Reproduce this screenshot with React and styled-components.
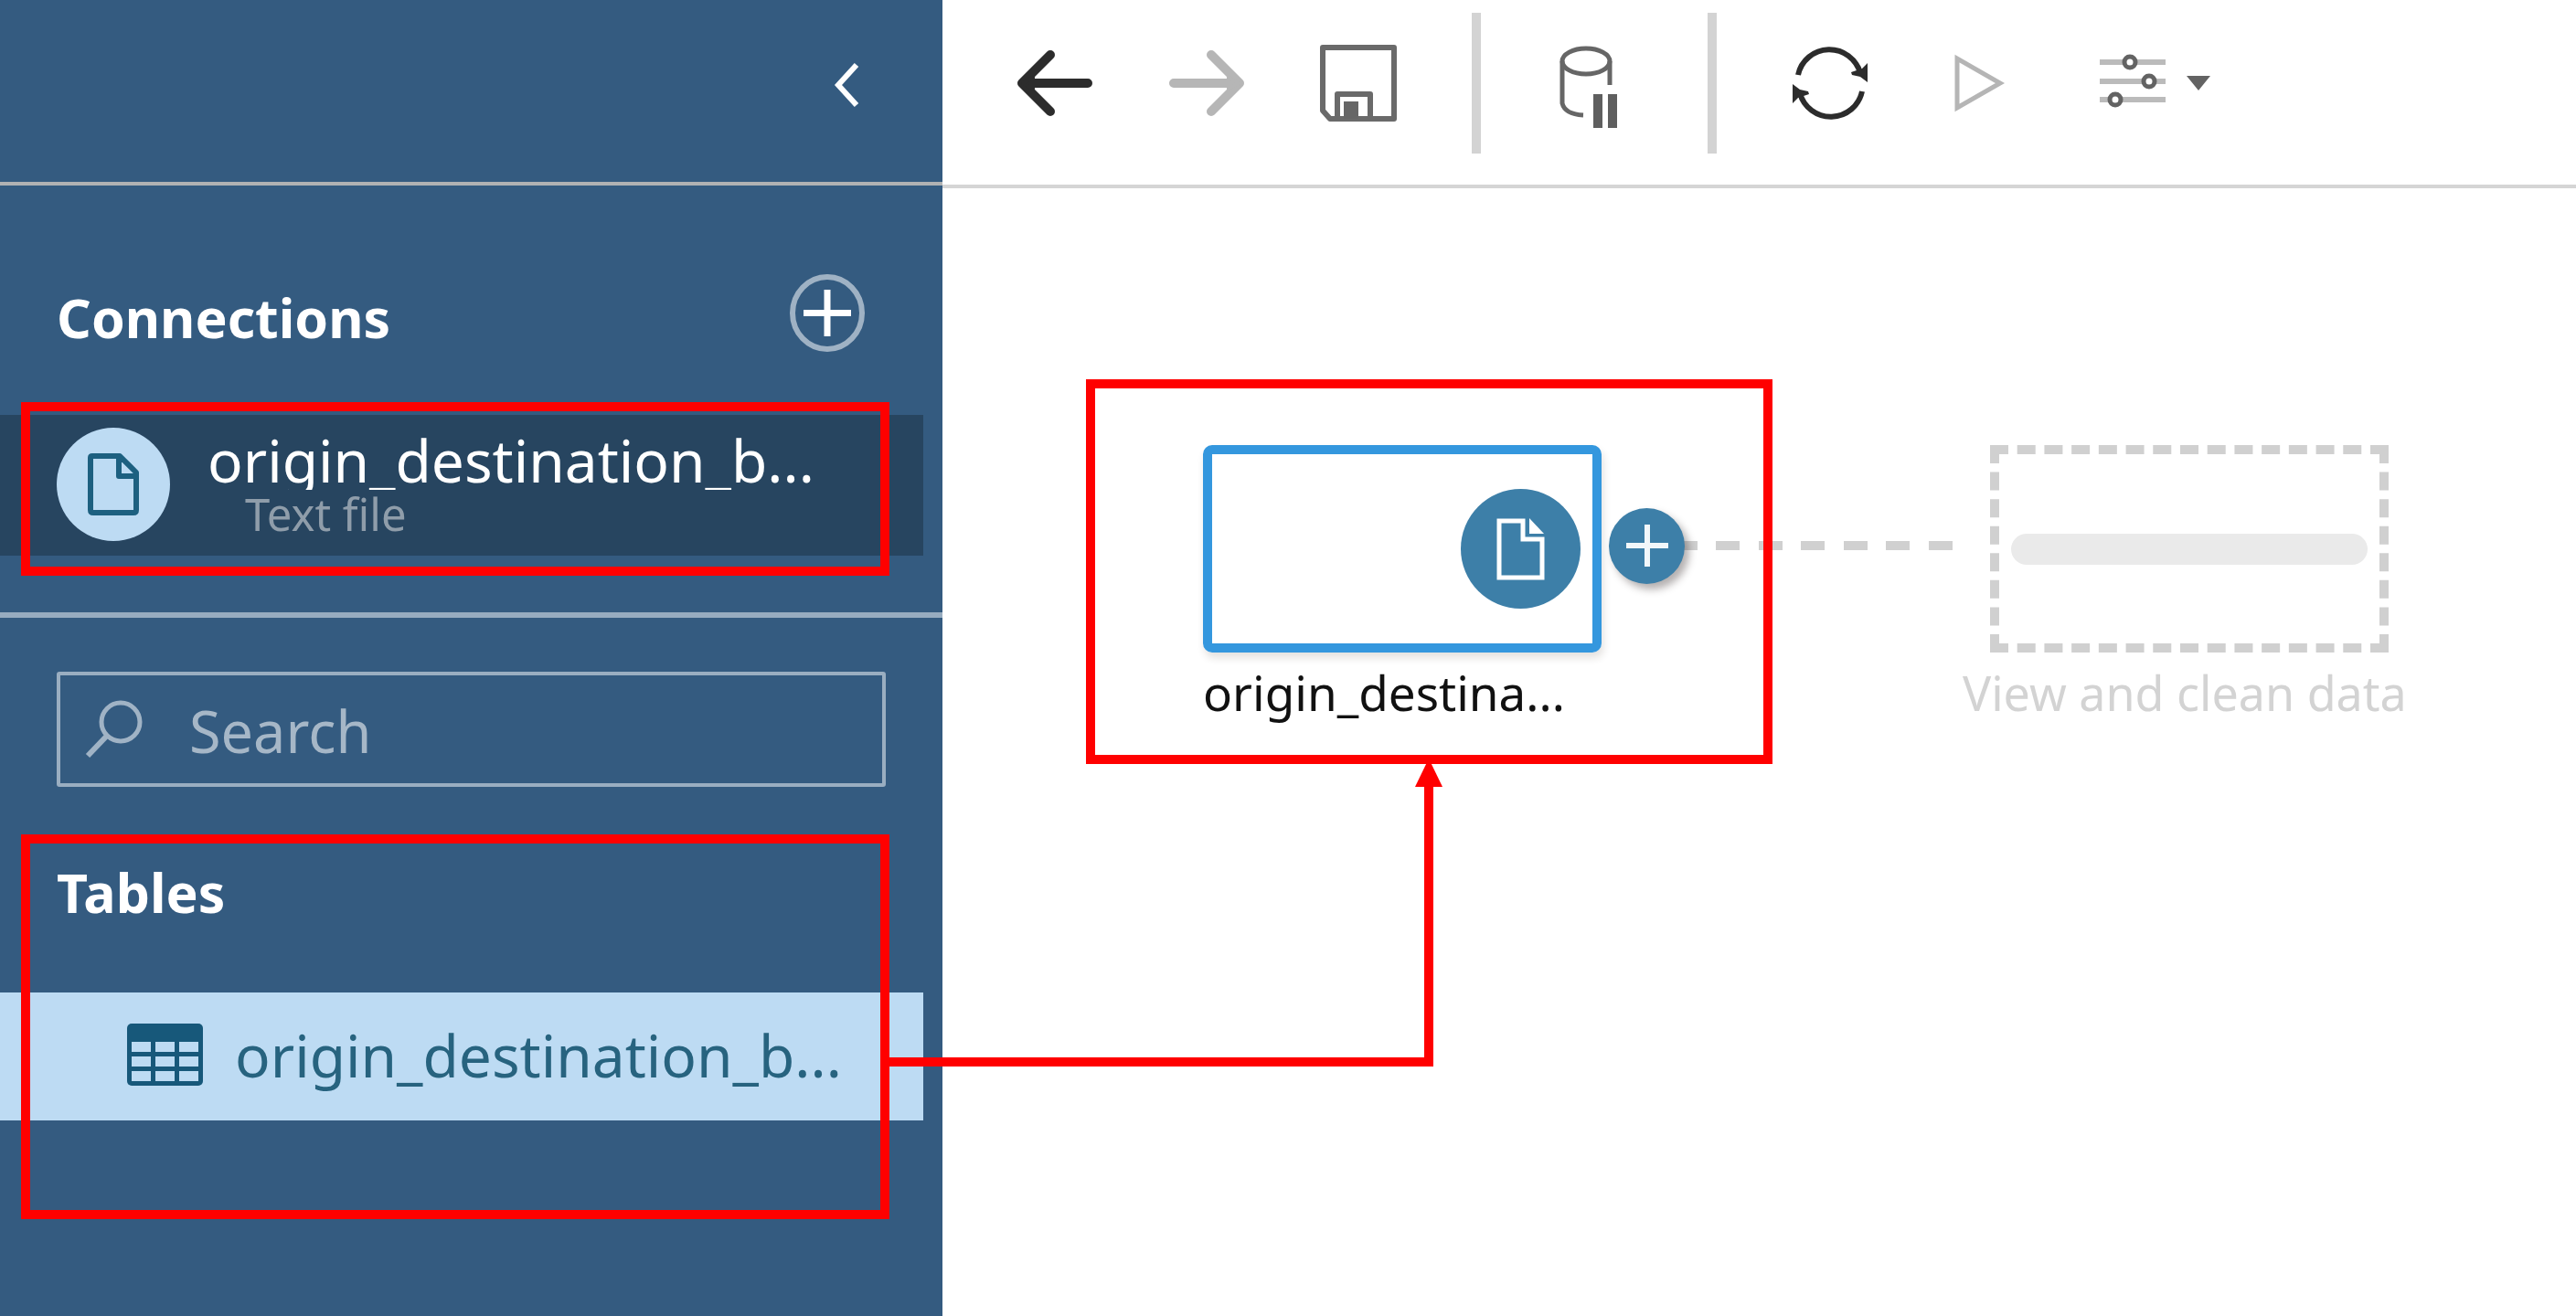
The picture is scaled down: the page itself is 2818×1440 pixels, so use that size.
import React from "react";
import styled, { createGlobalStyle } from "styled-components";

const GlobalStyle = createGlobalStyle`
  *, *::before, *::after { box-sizing: border-box; }
  body {
    margin: 0;
    background: #fff;
    font-family: "Noto Sans", "Open Sans", sans-serif;
  }
  button, input { font-family: inherit; }
`;

const Page = styled.div`
  position: relative;
  display: flex;
  min-height: 100vh;
  overflow: hidden;
`;

const Sidebar = styled.aside`
  flex: 0 0 1031px;
  min-width: 0;
  background: #345b80;
  color: #fff;
`;

const SidebarTop = styled.div`
  display: flex;
  justify-content: flex-end;
  align-items: center;
  height: 203px;
  padding: 0 85px 14px 0;
  border-bottom: 4px solid #b0b2b3;
`;

const IconButton = styled.button`
  display: flex;
  flex: none;
  padding: 0;
  border: 0;
  background: none;
  cursor: pointer;
`;

const ConnectionsHead = styled.div`
  display: flex;
  justify-content: space-between;
  align-items: flex-end;
  padding: 97px 85px 69px 62px;
`;

const SectionTitle = styled.h2`
  margin: 0;
  font-size: 59px;
  line-height: 76px;
  font-weight: 700;
`;

const ConnectionRow = styled.div`
  display: flex;
  align-items: center;
  gap: 41px;
  height: 154px;
  margin-right: 21px;
  padding: 0 0 3px 62px;
  background: #274560;
`;

const Disc = styled.span`
  display: flex;
  flex: none;
  align-items: center;
  justify-content: center;
  width: ${(p) => p.$size}px;
  height: ${(p) => p.$size}px;
  border-radius: 50%;
  background: ${(p) => p.$color};
`;

const ConnectionText = styled.div`
  min-width: 0;
`;

const ConnectionName = styled.div`
  overflow: hidden;
  font-size: 64px;
  line-height: 64px;
  white-space: nowrap;
`;

const ConnectionKind = styled.div`
  padding-left: 41px;
  font-size: 49px;
  line-height: 52px;
  color: #8f9daa;
`;

const Divider = styled.hr`
  height: 6px;
  margin: 62px 0 59px;
  border: 0;
  background: #97acc0;
`;

const SearchBox = styled.label`
  display: flex;
  align-items: center;
  gap: 51px;
  height: 126px;
  margin: 0 62px;
  padding: 0 27px;
  border: 4px solid #9aaec1;
  border-radius: 3px;
`;

const SearchInput = styled.input`
  flex: 1;
  width: 100%;
  min-width: 0;
  padding: 4px 0 0;
  border: 0;
  outline: 0;
  background: none;
  font-size: 63px;
  line-height: 88px;
  color: #fff;
  &::placeholder { color: #a6b7c7; opacity: 1; }
`;

const TablesHead = styled.div`
  padding: 77px 62px 72px;
`;

const TableRow = styled.button`
  display: flex;
  align-items: center;
  gap: 35px;
  width: calc(100% - 21px);
  height: 140px;
  padding: 0 0 4px 139px;
  border: 0;
  background: #bddbf3;
  color: #27637f;
  font-size: 64px;
  text-align: left;
  white-space: nowrap;
  cursor: pointer;
`;

const Main = styled.main`
  flex: 1;
  min-width: 0;
`;

const Toolbar = styled.header`
  display: flex;
  align-items: center;
  gap: 82px;
  height: 206px;
  padding: 14px 81px 34px;
  border-bottom: 4px solid #d5d5d5;
`;

const Separator = styled.span`
  flex: none;
  align-self: stretch;
  width: 10px;
  background: #d3d3d3;
`;

const Flow = styled.section`
  display: flex;
  align-items: flex-start;
  padding: 281px 0 0 285px;
`;

const Step = styled.div`
  display: flex;
  flex: none;
  flex-direction: column;
  align-items: ${(p) => (p.$centered ? "center" : "flex-start")};
  gap: 14px;
`;

const StepBox = styled.div`
  display: flex;
  align-items: center;
  justify-content: flex-end;
  width: 436px;
  height: 227px;
  padding: 0 13px;
  border: 10px ${(p) => (p.$pending ? "dashed #d0d0d0" : "solid #3497de")};
  border-radius: ${(p) => (p.$pending ? 0 : 10)}px;
  box-shadow: ${(p) => (p.$pending ? "none" : "2px 6px 8px rgba(60, 40, 30, 0.14)")};
`;

const StepLabel = styled.span`
  padding-right: ${(p) => (p.$pending ? 10 : 0)}px;
  font-size: ${(p) => (p.$pending ? 52 : 53)}px;
  line-height: 60px;
  white-space: nowrap;
  color: ${(p) => (p.$pending ? "#d3d3d3" : "#111")};
`;

const PendingBar = styled.span`
  flex: 1;
  height: 34px;
  border-radius: 17px;
  background: #eaeaea;
`;

const Link = styled.div`
  display: flex;
  flex: none;
  align-items: center;
  height: 220px;
  padding: 0 11px 0 8px;
`;

const AddStep = styled.button`
  display: flex;
  align-items: center;
  justify-content: center;
  z-index: 1;
  width: 83px;
  height: 83px;
  margin-right: -12px;
  padding: 0;
  border: 0;
  border-radius: 50%;
  background: #3d7fa8;
  box-shadow: 5px 6px 8px rgba(40, 30, 30, 0.35);
  cursor: pointer;
`;

const Callout = styled.div`
  position: absolute;
  left: ${(p) => p.$x}px;
  top: ${(p) => p.$y}px;
  width: ${(p) => p.$w}px;
  height: ${(p) => p.$h}px;
  border: 10px solid #f00;
  pointer-events: none;
`;

const CalloutArrow = styled.svg`
  position: absolute;
  left: 972px;
  top: 826px;
  pointer-events: none;
`;

function ToolIcon({ label, width = 84, children }) {
  return (
    <IconButton type="button" aria-label={label}>
      <svg width={width} height="100" viewBox={`0 0 ${width} 100`} fill="none">
        {children}
      </svg>
    </IconButton>
  );
}

function Arrow({ color, flipped }) {
  return (
    <g
      stroke={color}
      strokeWidth="10"
      strokeLinecap="round"
      strokeLinejoin="round"
      transform={flipped ? "translate(84 0) scale(-1 1)" : undefined}
    >
      <path d="M7 50H78M37 19L6 50L37 81" />
      <path d="M7 50L18 44V56Z" fill={color} strokeWidth="4" />
    </g>
  );
}

function App() {
  return (
    <>
      <GlobalStyle />
      <Page>
        <Sidebar>
          <SidebarTop>
            <IconButton type="button" aria-label="Collapse pane">
              <svg width="40" height="56" viewBox="0 0 40 56" fill="none">
                <path d="M31 6L11 28L31 50" stroke="#fff" strokeWidth="6" />
              </svg>
            </IconButton>
          </SidebarTop>

          <ConnectionsHead>
            <SectionTitle>Connections</SectionTitle>
            <IconButton type="button" aria-label="Add connection">
              <svg width="82" height="85" viewBox="0 0 82 85" fill="none">
                <ellipse cx="41" cy="42.5" rx="38" ry="39.5" stroke="#9fb2c4" strokeWidth="6" />
                <path d="M41 17V68M15 42.5H67" stroke="#fff" strokeWidth="7" />
              </svg>
            </IconButton>
          </ConnectionsHead>

          <ConnectionRow>
            <Disc $size={124} $color="#bddbf3">
              <svg width="58" height="70" viewBox="0 0 58 70" fill="none">
                <path
                  d="M6 4H36L54 22V63Q54 66 51 66H7Q4 66 4 63V6Q4 4 6 4Z M35 5V26H54"
                  stroke="#1d6080"
                  strokeWidth="6"
                  strokeLinejoin="round"
                />
              </svg>
            </Disc>
            <ConnectionText>
              <ConnectionName>origin_destination_b...</ConnectionName>
              <ConnectionKind>Text file</ConnectionKind>
            </ConnectionText>
          </ConnectionRow>

          <Divider />

          <SearchBox>
            <svg width="63" height="64" viewBox="0 0 63 64" fill="none" stroke="#a0b3c5">
              <circle cx="39" cy="24" r="21" strokeWidth="5" />
              <path d="M24 39L3 61" strokeWidth="6" />
            </svg>
            <SearchInput type="search" placeholder="Search" aria-label="Search" />
          </SearchBox>

          <TablesHead>
            <SectionTitle>Tables</SectionTitle>
          </TablesHead>

          <TableRow type="button">
            <svg width="83" height="68" viewBox="0 0 83 68">
              <rect width="83" height="68" rx="5" fill="#17587a" />
              <g fill="#bddbf3">
                {[20, 36, 52].map((y) =>
                  [5, 31, 57].map((x) => (
                    <rect key={`${x}-${y}`} x={x} y={y} width="21" height="11" />
                  ))
                )}
              </g>
            </svg>
            origin_destination_b...
          </TableRow>
        </Sidebar>

        <Main>
          <Toolbar>
            <ToolIcon label="Undo">
              <Arrow color="#2c2c2c" />
            </ToolIcon>
            <ToolIcon label="Redo">
              <Arrow color="#b6b6b6" flipped />
            </ToolIcon>
            <ToolIcon label="Save">
              <g stroke="#6a6a6a" strokeWidth="6" strokeLinejoin="round">
                <path d="M3 11H81V89H11L3 80Z" />
                <path d="M19 89V62H55V89" />
              </g>
              <path d="M26 70H42V89H26Z" fill="#666" />
            </ToolIcon>
            <Separator />
            <ToolIcon label="Pause data updates">
              <g stroke="#666" strokeWidth="5">
                <ellipse cx="33" cy="26" rx="26" ry="14" />
                <path d="M7 26V72Q10 84 30 85M59 26V52" />
              </g>
              <path d="M41 62H51V99H41ZM57 62H67V99H57Z" fill="#5f5f5f" />
            </ToolIcon>
            <Separator />
            <ToolIcon label="Refresh">
              <g id="refresh-half">
                <path d="M7 41A35 35 0 0 1 75 39" stroke="#2c2c2c" strokeWidth="6" />
                <path d="M65 38L77 34L83 28V49L75 43L66 41Z" fill="#2c2c2c" />
              </g>
              <use href="#refresh-half" transform="rotate(180 42 50)" />
            </ToolIcon>
            <ToolIcon label="Run flow">
              <path d="M15 23V77L62 50Z" stroke="#b5b5b5" strokeWidth="5" />
            </ToolIcon>
            <ToolIcon label="Parameters" width={126}>
              <path d="M5 27H77M5 48H77M5 68H77" stroke="#bbb" strokeWidth="6" />
              <g stroke="#636363" strokeWidth="5" fill="#fff">
                <circle cx="38" cy="27" r="6" />
                <circle cx="59" cy="48" r="6" />
                <circle cx="22" cy="68" r="6" />
              </g>
              <path d="M100 42H126L113 58Z" fill="#636363" />
            </ToolIcon>
          </Toolbar>

          <Flow>
            <Step>
              <StepBox>
                <Disc $size={131} $color="#3d7fa8">
                  <svg width="54" height="70" viewBox="0 0 54 70" fill="none">
                    <path d="M29 4H3V66H50V24H29Z" stroke="#fff" strokeWidth="5" />
                    <path d="M36 1V18H52Z" fill="#fff" />
                  </svg>
                </Disc>
              </StepBox>
              <StepLabel>origin_destina...</StepLabel>
            </Step>

            <Link>
              <AddStep type="button" aria-label="Add step">
                <svg width="46" height="46" viewBox="0 0 46 46">
                  <path d="M23 0V46M0 23H46" stroke="#f2f7fa" strokeWidth="6" />
                </svg>
              </AddStep>
              <svg width="305" height="10" viewBox="0 0 305 10">
                <path d="M0 5H305" stroke="#d0d0d0" strokeWidth="10" strokeDasharray="26 20 26 21" />
              </svg>
            </Link>

            <Step $centered>
              <StepBox $pending>
                <PendingBar />
              </StepBox>
              <StepLabel $pending>View and clean data</StepLabel>
            </Step>
          </Flow>
        </Main>

        <Callout $x={23} $y={440} $w={950} $h={190} />
        <Callout $x={23} $y={913} $w={950} $h={421} />
        <Callout $x={1188} $y={415} $w={751} $h={421} />
        <CalloutArrow width="610" height="346" viewBox="0 0 610 346">
          <path d="M0 336H591V30" fill="none" stroke="#f00" strokeWidth="10" />
          <path d="M591 4L606 35H576Z" fill="#f00" />
        </CalloutArrow>
      </Page>
    </>
  );
}

export default App;
